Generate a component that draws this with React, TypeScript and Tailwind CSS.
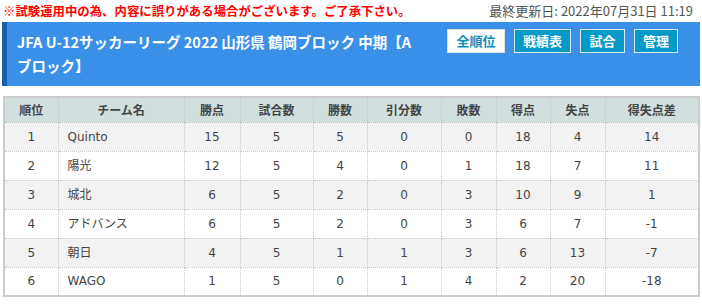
const ROWS: { rank: number; team: string; vals: (number | string)[] }[] = [
  { rank: 1, team: 'Quinto', vals: [15, 5, 5, 0, 0, 18, 4, 14] },
  { rank: 2, team: '陽光', vals: [12, 5, 4, 0, 1, 18, 7, 11] },
  { rank: 3, team: '城北', vals: [6, 5, 2, 0, 3, 10, 9, 1] },
  { rank: 4, team: 'アドバンス', vals: [6, 5, 2, 0, 3, 6, 7, -1] },
  { rank: 5, team: '朝日', vals: [4, 5, 1, 1, 3, 6, 13, -7] },
  { rank: 6, team: 'WAGO', vals: [1, 5, 0, 1, 4, 2, 20, -18] },
];

const HEADS = ['順位', 'チーム名', '勝点', '試合数', '勝数', '引分数', '敗数', '得点', '失点', '得失点差'];
const WIDTHS = ['w-[54px]', 'w-[126px]', 'w-[56px]', 'w-[73px]', 'w-[54px]', 'w-[74px]', 'w-[55px]', 'w-[54px]', 'w-[55px]', ''];

export default function App() {
  return (
    <div className="w-[702px] h-[305px] overflow-hidden bg-white font-['DejaVu_Sans','Noto_Sans_CJK_JP',sans-serif]">
      {/* notice line */}
      <div className="flex h-[22px] items-center justify-between pl-[3px] pr-[9px]">
        <span className="text-[12.4px] font-bold text-[#ff0000] font-['Noto_Sans_CJK_JP',sans-serif]">
          ※試験運用中の為、内容に誤りがある場合がございます。ご了承下さい。
        </span>
        <span className="text-[13px] text-[#555] font-['Noto_Sans_CJK_JP',sans-serif]">最終更新日: 2022年07月31日 11:19</span>
      </div>

      {/* title band */}
      <div className="ml-[2px] mr-[2px] flex h-[64px] border-l-[5px] border-[#1a5fa8] bg-[#3a8fe8]">
        <h1 className="w-[420px] pl-[10px] pr-[2px] pt-[8px] text-[14.5px] font-bold leading-[24px] text-white font-['Noto_Sans_CJK_JP',sans-serif]">
          JFA U-12サッカーリーグ 2022 山形県 鶴岡ブロック 中期【A ブロック】
        </h1>
        <div className="ml-[20px] flex gap-[9px] pt-[7px] text-[13px] font-bold font-['Noto_Sans_CJK_JP',sans-serif]">
          <button className="h-[24px] w-[58px] border border-[#ddd] bg-white text-[#0a8fc0]">全順位</button>
          <button className="h-[24px] w-[57px] border border-[#d8e8ee] bg-[#0399c9] text-white">戦績表</button>
          <button className="h-[24px] w-[45px] border border-[#d8e8ee] bg-[#0399c9] text-white">試合</button>
          <button className="h-[24px] w-[44px] border border-[#d8e8ee] bg-[#0399c9] text-white">管理</button>
        </div>
      </div>

      {/* standings */}
      <table className="ml-[3px] mt-[10px] w-[697px] border-collapse border-2 border-[#ccc] text-[12px] text-[#444] font-['DejaVu_Sans','Noto_Sans_CJK_JP',sans-serif]">
        <thead>
          <tr className="h-[25px] bg-[#d2dfdf]">
            {HEADS.map((h, i) => (
              <th
                key={h}
                className={`${WIDTHS[i]} border-b border-b-[#bbb] border-x border-dotted border-x-[#c8c8c8] p-0 text-center font-bold font-['Noto_Sans_CJK_JP',sans-serif]`}
              >
                {h}
              </th>
            ))}
          </tr>
        </thead>
        <tbody>
          {ROWS.map((r, ri) => (
            <tr key={r.rank} className={`h-[29px] ${ri % 2 === 0 ? 'bg-[#f2f2f2]' : 'bg-white'}`}>
              <td className="border border-dotted border-[#c8c8c8] p-0 text-center">{r.rank}</td>
              <td className="border border-dotted border-[#c8c8c8] p-0 pl-[9px] text-left">{r.team}</td>
              {r.vals.map((v, vi) => (
                <td key={vi} className="border border-dotted border-[#c8c8c8] p-0 text-center">
                  {v}
                </td>
              ))}
            </tr>
          ))}
        </tbody>
      </table>
    </div>
  );
}
